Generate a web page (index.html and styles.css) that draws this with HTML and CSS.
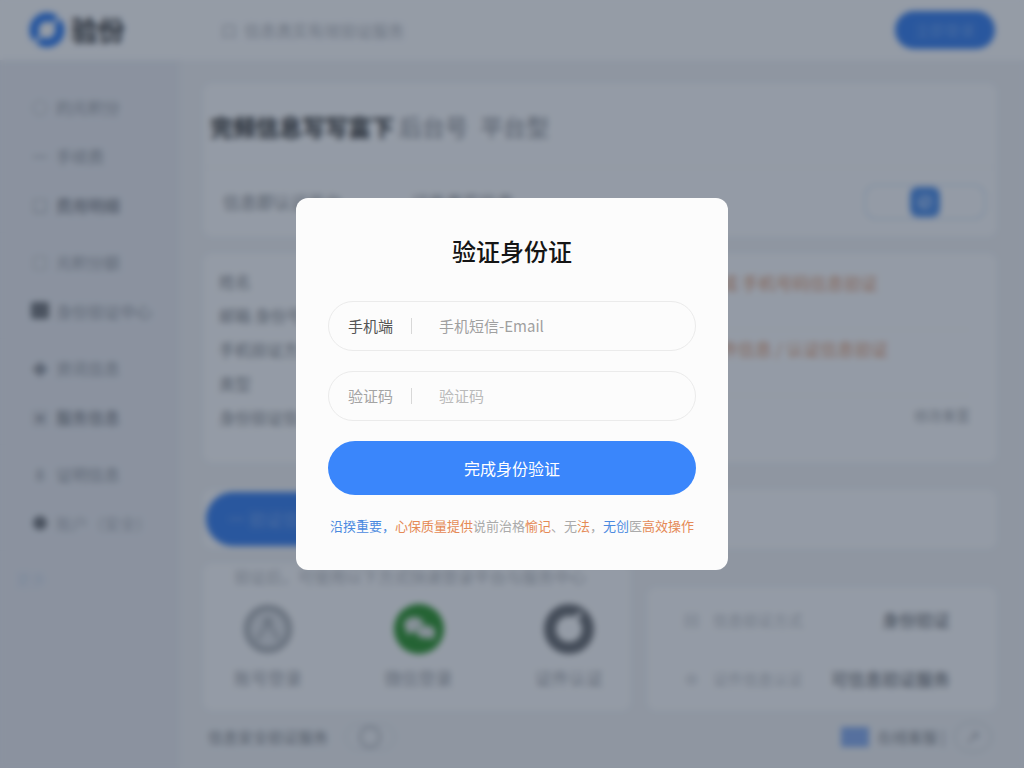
FILE: index.html
```html
<!DOCTYPE html>
<html lang="zh-CN">
<head>
<meta charset="utf-8">
<meta name="viewport" content="width=device-width, initial-scale=1">
<title>验证身份证</title>
<link rel="stylesheet" href="styles.css">
</head>
<body>
<div class="app">
  <header class="topbar">
    <a class="brand" href="#">
      <svg class="brand-logo" viewBox="0 0 36 36" aria-hidden="true">
        <circle cx="18" cy="18" r="13" fill="none" stroke="#2f7bf0" stroke-width="9"/>
        <path d="M23 13l8-8M5 31l7-7" stroke="#fff" stroke-width="3"/>
      </svg>
      <span>验份</span>
    </a>
    <span class="topbar-note">口 &nbsp;信息真实有效验证服务</span>
    <button class="topbar-button" type="button">立即登录</button>
  </header>

  <div class="body">
    <nav class="sidebar">
      <div class="nav-group">
        <a class="nav-item" href="#"><span class="nav-icon">○</span>的元积分</a>
        <a class="nav-item" href="#"><span class="nav-icon">一</span>手续费</a>
        <a class="nav-item strong" href="#"><span class="nav-icon">□</span>费用明细</a>
      </div>
      <div class="nav-group">
        <a class="nav-item" href="#"><span class="nav-icon">□</span>元积分额</a>
        <a class="nav-item" href="#"><span class="nav-icon solid"></span>身份验证中心</a>
      </div>
      <div class="nav-group">
        <a class="nav-item" href="#"><span class="nav-icon">◆</span>资讯信息</a>
        <a class="nav-item strong" href="#"><span class="nav-icon">▣</span>服务信息</a>
      </div>
      <div class="nav-group">
        <a class="nav-item" href="#"><span class="nav-icon">8</span>证明信息</a>
        <a class="nav-item faint" href="#"><span class="nav-icon round"></span>账户（安全）</a>
      </div>
      <a class="nav-more" href="#">更多</a>
    </nav>

    <main class="main">
      <section class="card">
        <h1 class="page-title"><strong>完频信息写写富下</strong><span>后台号</span><span class="second">平台型</span></h1>
        <div class="summary">
          <span>信息即认证平台</span>
          <span>证件真实信息</span>
          <button class="outline-button" type="button" aria-label="拍摄">
            <svg viewBox="0 0 30 30" aria-hidden="true"><rect width="30" height="30" rx="8" fill="#4f8ee8"/><circle cx="15" cy="15" r="7" fill="#9cc0f5"/><path d="M12 11l7 7" stroke="#4f8ee8" stroke-width="3"/></svg>
          </button>
        </div>
      </section>

      <section class="card details">
        <ul class="labels">
          <li>姓名</li>
          <li>邮箱 身份号</li>
          <li>手机验证方式</li>
          <li>类型</li>
          <li>身份验证信息</li>
        </ul>
        <div class="values">
          <p>完成 手机号码信息验证</p>
          <p>证件信息 / 认证信息验证</p>
          <p class="muted">修改重置</p>
        </div>
      </section>

      <section class="card submit-bar">
        <button class="submit-button" type="button">一 验证信息</button>
      </section>

      <div class="columns">
        <section class="card channels">
          <p class="channels-note">验证后，可使用以下方式快速登录平台与服务中心</p>
          <div class="channel-list">
            <a class="channel" href="#">
              <svg viewBox="0 0 50 50" aria-hidden="true"><circle cx="25" cy="25" r="21" fill="#e2e4e7" stroke="#b3b6ba" stroke-width="7"/><circle cx="25" cy="18" r="5" fill="#b3b6ba"/><path d="M14 36l8-13h6l8 13" fill="none" stroke="#c0c3c7" stroke-width="5"/></svg>
              <span>账号登录</span>
            </a>
            <a class="channel" href="#">
              <svg viewBox="0 0 50 50" aria-hidden="true"><circle cx="25" cy="25" r="25" fill="#31962e"/><ellipse cx="20" cy="21" rx="10" ry="8" fill="#e4e8e4"/><ellipse cx="32" cy="28" rx="10" ry="7" fill="#e4e8e4" stroke="#31962e"/><path d="M13 26l-1 5 6-3M36 33l4 4v-6" fill="#e4e8e4"/></svg>
              <span>微信登录</span>
            </a>
            <a class="channel" href="#">
              <svg viewBox="0 0 50 50" aria-hidden="true"><circle cx="25" cy="25" r="19" fill="none" stroke="#6c6e72" stroke-width="12"/><path d="M29 17l8-8" stroke="#fff" stroke-width="4"/></svg>
              <span>证件认证</span>
            </a>
          </div>
        </section>
        <section class="card facts">
          <div class="fact"><span class="fact-icon">回</span><span>信息验证方式</span><strong>身份验证</strong></div>
          <div class="fact"><span class="fact-icon">⊕</span><span>证件信息认证</span><strong>可信息验证服务</strong></div>
        </section>
      </div>

      <footer class="footer">
        <span>信息安全验证服务</span>
        <span class="footer-pill"><i></i></span>
        <span class="footer-flag"></span>
        <span>在线客服 |</span>
        <button class="round-button" type="button" aria-label="返回">↗</button>
      </footer>
    </main>
  </div>
</div>

<div class="overlay">
  <form class="dialog" role="dialog" aria-modal="true" aria-labelledby="dialog-title">
    <h2 class="dialog-title" id="dialog-title">验证身份证</h2>
    <div class="field">
      <label class="dark" for="phone">手机端</label>
      <input class="dark" id="phone" type="text" placeholder="手机短信-Email">
    </div>
    <div class="field">
      <label for="code">验证码</label>
      <input id="code" type="text" placeholder="验证码">
    </div>
    <button class="dialog-button" type="submit">完成身份验证</button>
    <p class="tip"><span class="blue">沿揆重要，</span><span class="orange">心保质量提供</span>说前治格<span class="orange">愉记</span>、无<span class="orange">法</span>，<span class="blue">无创</span>医<span class="orange">高效操作</span></p>
  </form>
</div>
</body>
</html>
```
FILE: styles.css
```css
* { box-sizing: border-box; }

body {
  margin: 0;
  background: #f2f3f5;
  color: #85878b;
  font-family: "Noto Sans CJK SC", "Noto Sans", sans-serif;
  font-size: 15px;
  line-height: 24px;
}

h1, h2, p, ul { margin: 0; padding: 0; }
ul { list-style: none; }
a { color: inherit; text-decoration: none; }
button, input { font: inherit; }
button { border: 0; cursor: pointer; }

.app { min-height: 100vh; display: flex; flex-direction: column; }

/* Top bar */
.topbar {
  display: flex;
  align-items: center;
  height: 60px;
  padding: 0 29px;
  background: #fdfdfe;
}
.brand {
  display: flex;
  align-items: center;
  gap: 6px;
  width: 192px;
  color: #333;
  font-size: 27px;
  font-weight: 700;
}
.brand-logo { width: 36px; height: 36px; }
.topbar-note { flex: 1; color: #b4b6ba; font-size: 16px; }
.topbar-button {
  width: 100px;
  height: 38px;
  border-radius: 19px;
  background: #3a80ee;
  color: #6fa4f5;
  font-size: 15px;
}

.body { flex: 1; display: flex; }

/* Sidebar */
.sidebar { width: 180px; padding-top: 22px; background: #ebecf1; }
.nav-group { padding-bottom: 3px; margin-bottom: 4px; border-bottom: 1px solid #e7e8ed; }
.nav-item {
  display: flex;
  align-items: center;
  gap: 7px;
  height: 49px;
  padding-left: 31px;
  color: #999ca3;
  font-size: 16px;
  white-space: nowrap;
}
.nav-item.strong { color: #85878d; font-weight: 500; }
.nav-item.faint { color: #b2b5bb; }
.nav-icon { flex: none; width: 18px; text-align: center; }
.nav-icon.solid { height: 17px; border-radius: 3px; background: #77797e; }
.nav-icon.round { width: 14px; height: 14px; margin: 0 2px; border-radius: 50%; background: #77797e; }
.nav-more { display: block; padding: 12px 16px; color: #d3dcec; }

/* Main column */
.main {
  flex: 1;
  min-width: 0;
  display: flex;
  flex-direction: column;
  padding: 24px 28px 0 24px;
}
.card { border-radius: 8px; background: #fcfcfd; }

.page-title {
  display: flex;
  align-items: center;
  height: 84px;
  padding-left: 6px;
  border-bottom: 1px solid #f2f3f5;
  color: #96989d;
  font-size: 23px;
  font-weight: 500;
}
.page-title strong { color: #303030; font-weight: 700; margin-right: 5px; }
.page-title .second { margin-left: 12px; }
.summary {
  display: flex;
  align-items: center;
  gap: 70px;
  height: 68px;
  padding: 0 10px 0 19px;
  font-size: 17px;
}
.outline-button {
  display: flex;
  align-items: center;
  justify-content: center;
  width: 122px;
  height: 36px;
  margin-left: auto;
  border: 2px solid #dbe6f6;
  border-radius: 12px;
  background: none;
}
.outline-button svg { width: 30px; height: 30px; }

.details { display: flex; margin-top: 18px; padding: 10px 26px 0 15px; }
.labels { flex: 1; padding-bottom: 28px; }
.labels li { height: 34px; line-height: 34px; font-size: 16px; }
.values { width: 266px; color: #e09a70; font-size: 17px; }
.values p { height: 66px; padding-top: 7px; border-bottom: 1px solid #f4f4f6; }
.values .muted { height: 60px; border: 0; color: #a8aaae; font-size: 14px; text-align: right; }

.submit-bar { margin-top: 28px; padding: 2px; }
.submit-button {
  display: block;
  width: 368px;
  height: 54px;
  padding: 0 22px;
  border-radius: 27px;
  background: #3a80ee;
  color: #7baaf5;
  font-size: 17px;
  text-align: left;
}

.columns { display: flex; align-items: flex-end; gap: 18px; margin-top: 16px; }
.channels { flex: 1; padding: 0 27px 20px 30px; }
.channels-note { color: #b8babe; font-size: 16px; line-height: 24px; white-space: nowrap; }
.channel-list { display: flex; justify-content: space-between; margin-top: 16px; }
.channel {
  display: flex;
  flex-direction: column;
  align-items: center;
  gap: 12px;
  color: #a2a4a9;
  font-size: 17px;
}
.channel svg { width: 50px; height: 50px; }

.facts { width: 348px; padding: 2px 46px 2px 36px; }
.fact { display: flex; align-items: center; height: 59px; color: #c0c2c6; white-space: nowrap; }
.fact-icon { width: 29px; }
.fact strong { margin-left: auto; color: #77797d; font-size: 17px; font-weight: 500; }

.footer { display: flex; align-items: center; gap: 9px; height: 54px; padding: 0 4px; }
.footer-pill {
  display: flex;
  align-items: center;
  justify-content: center;
  width: 50px;
  height: 26px;
  margin: 0 auto 0 8px;
  border: 1px solid #d4d6da;
  border-radius: 13px;
}
.footer-pill i { width: 22px; height: 22px; border: 2px solid #b4b6ba; border-radius: 50%; }
.footer-flag { width: 28px; height: 20px; background: #8aaeee; }
.round-button {
  width: 38px;
  height: 30px;
  padding: 0;
  border: 1px solid #c4c6ca;
  border-radius: 15px;
  background: none;
  color: #909296;
}

/* Modal dialog */
.overlay {
  position: fixed;
  inset: 0;
  display: flex;
  align-items: center;
  justify-content: center;
  background: rgba(22, 38, 60, .45);
  backdrop-filter: blur(3px);
}
.dialog {
  width: 432px;
  max-width: 92vw;
  padding: 35px 32px 32px;
  border-radius: 12px;
  background: #fcfcfc;
}
.dialog-title {
  margin-bottom: 32px;
  color: #151515;
  font-size: 24px;
  font-weight: 500;
  line-height: 36px;
  text-align: center;
}
.field {
  display: flex;
  align-items: center;
  height: 50px;
  margin-bottom: 20px;
  padding: 0 19px;
  border: 1px solid #ebebeb;
  border-radius: 25px;
}
.field label {
  width: 64px;
  border-right: 1px solid #d8d8d8;
  color: #a4a4a4;
  line-height: 16px;
}
.field label.dark { color: #555; }
.field input {
  flex: 1;
  min-width: 0;
  padding: 0 0 0 27px;
  border: 0;
  outline: 0;
  background: none;
  color: #333;
}
.field input::placeholder { color: #bababa; opacity: 1; }
.field input.dark::placeholder { color: #a0a0a0; }
.dialog-button {
  display: block;
  width: 100%;
  height: 54px;
  border-radius: 27px;
  background: #3a86fb;
  color: #fff;
  font-size: 16px;
}
.tip {
  margin-top: 19px;
  color: #aaa;
  font-size: 13px;
  line-height: 24px;
  text-align: center;
  white-space: nowrap;
}
.tip .blue { color: #4b8ae0; }
.tip .orange { color: #e58a56; }
```
